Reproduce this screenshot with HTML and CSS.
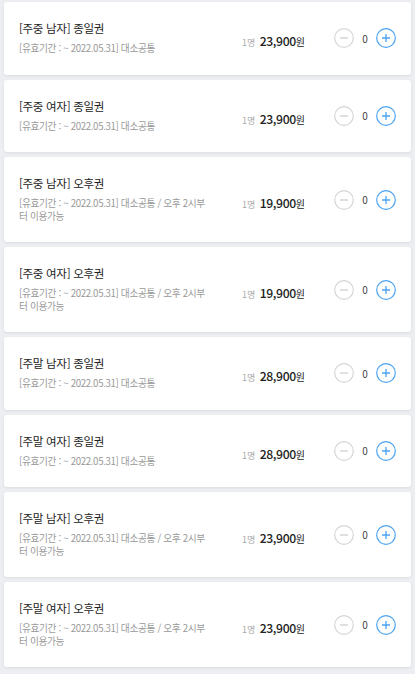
FILE: index.html
```html
<!DOCTYPE html>
<html lang="ko">
<head>
  <meta charset="UTF-8">
  <title>이용권 선택</title>
  <meta name="viewport" content="width=device-width, initial-scale=1.0">
  <link rel="stylesheet" href="styles.css">
</head>
<body>

  <div class="ticket-list">

    <div class="ticket">
      <div class="info">
        <p class="name">[주중 남자] 종일권</p>
        <p class="desc">[유효기간 : ~ 2022.05.31] 대소공통</p>
      </div>
      <div class="price"><span class="unit">1명</span> <span class="amount">23,900</span><span class="won">원</span></div>
      <div class="counter">
        <button class="ctl minus"><svg width="20" height="20" viewBox="0 0 20 20"><circle cx="10" cy="10" r="9.3" fill="none" stroke="#d6d6d6" stroke-width="1.2"/><path d="M6 10h8" stroke="#d0d0d0" stroke-width="1.3"/></svg></button>
        <span class="qty">0</span>
        <button class="ctl plus"><svg width="20" height="20" viewBox="0 0 20 20"><circle cx="10" cy="10" r="9.3" fill="none" stroke="#4ba3f3" stroke-width="1.2"/><path d="M6 10h8M10 6v8" stroke="#4ba3f3" stroke-width="1.3"/></svg></button>
      </div>
    </div>

    <div class="ticket">
      <div class="info">
        <p class="name">[주중 여자] 종일권</p>
        <p class="desc">[유효기간 : ~ 2022.05.31] 대소공통</p>
      </div>
      <div class="price"><span class="unit">1명</span> <span class="amount">23,900</span><span class="won">원</span></div>
      <div class="counter">
        <button class="ctl minus"><svg width="20" height="20" viewBox="0 0 20 20"><circle cx="10" cy="10" r="9.3" fill="none" stroke="#d6d6d6" stroke-width="1.2"/><path d="M6 10h8" stroke="#d0d0d0" stroke-width="1.3"/></svg></button>
        <span class="qty">0</span>
        <button class="ctl plus"><svg width="20" height="20" viewBox="0 0 20 20"><circle cx="10" cy="10" r="9.3" fill="none" stroke="#4ba3f3" stroke-width="1.2"/><path d="M6 10h8M10 6v8" stroke="#4ba3f3" stroke-width="1.3"/></svg></button>
      </div>
    </div>

    <div class="ticket">
      <div class="info">
        <p class="name">[주중 남자] 오후권</p>
        <p class="desc">[유효기간 : ~ 2022.05.31] 대소공통 / 오후 2시부터 이용가능</p>
      </div>
      <div class="price"><span class="unit">1명</span> <span class="amount">19,900</span><span class="won">원</span></div>
      <div class="counter">
        <button class="ctl minus"><svg width="20" height="20" viewBox="0 0 20 20"><circle cx="10" cy="10" r="9.3" fill="none" stroke="#d6d6d6" stroke-width="1.2"/><path d="M6 10h8" stroke="#d0d0d0" stroke-width="1.3"/></svg></button>
        <span class="qty">0</span>
        <button class="ctl plus"><svg width="20" height="20" viewBox="0 0 20 20"><circle cx="10" cy="10" r="9.3" fill="none" stroke="#4ba3f3" stroke-width="1.2"/><path d="M6 10h8M10 6v8" stroke="#4ba3f3" stroke-width="1.3"/></svg></button>
      </div>
    </div>

    <div class="ticket">
      <div class="info">
        <p class="name">[주중 여자] 오후권</p>
        <p class="desc">[유효기간 : ~ 2022.05.31] 대소공통 / 오후 2시부터 이용가능</p>
      </div>
      <div class="price"><span class="unit">1명</span> <span class="amount">19,900</span><span class="won">원</span></div>
      <div class="counter">
        <button class="ctl minus"><svg width="20" height="20" viewBox="0 0 20 20"><circle cx="10" cy="10" r="9.3" fill="none" stroke="#d6d6d6" stroke-width="1.2"/><path d="M6 10h8" stroke="#d0d0d0" stroke-width="1.3"/></svg></button>
        <span class="qty">0</span>
        <button class="ctl plus"><svg width="20" height="20" viewBox="0 0 20 20"><circle cx="10" cy="10" r="9.3" fill="none" stroke="#4ba3f3" stroke-width="1.2"/><path d="M6 10h8M10 6v8" stroke="#4ba3f3" stroke-width="1.3"/></svg></button>
      </div>
    </div>

    <div class="ticket">
      <div class="info">
        <p class="name">[주말 남자] 종일권</p>
        <p class="desc">[유효기간 : ~ 2022.05.31] 대소공통</p>
      </div>
      <div class="price"><span class="unit">1명</span> <span class="amount">28,900</span><span class="won">원</span></div>
      <div class="counter">
        <button class="ctl minus"><svg width="20" height="20" viewBox="0 0 20 20"><circle cx="10" cy="10" r="9.3" fill="none" stroke="#d6d6d6" stroke-width="1.2"/><path d="M6 10h8" stroke="#d0d0d0" stroke-width="1.3"/></svg></button>
        <span class="qty">0</span>
        <button class="ctl plus"><svg width="20" height="20" viewBox="0 0 20 20"><circle cx="10" cy="10" r="9.3" fill="none" stroke="#4ba3f3" stroke-width="1.2"/><path d="M6 10h8M10 6v8" stroke="#4ba3f3" stroke-width="1.3"/></svg></button>
      </div>
    </div>

    <div class="ticket">
      <div class="info">
        <p class="name">[주말 여자] 종일권</p>
        <p class="desc">[유효기간 : ~ 2022.05.31] 대소공통</p>
      </div>
      <div class="price"><span class="unit">1명</span> <span class="amount">28,900</span><span class="won">원</span></div>
      <div class="counter">
        <button class="ctl minus"><svg width="20" height="20" viewBox="0 0 20 20"><circle cx="10" cy="10" r="9.3" fill="none" stroke="#d6d6d6" stroke-width="1.2"/><path d="M6 10h8" stroke="#d0d0d0" stroke-width="1.3"/></svg></button>
        <span class="qty">0</span>
        <button class="ctl plus"><svg width="20" height="20" viewBox="0 0 20 20"><circle cx="10" cy="10" r="9.3" fill="none" stroke="#4ba3f3" stroke-width="1.2"/><path d="M6 10h8M10 6v8" stroke="#4ba3f3" stroke-width="1.3"/></svg></button>
      </div>
    </div>

    <div class="ticket">
      <div class="info">
        <p class="name">[주말 남자] 오후권</p>
        <p class="desc">[유효기간 : ~ 2022.05.31] 대소공통 / 오후 2시부터 이용가능</p>
      </div>
      <div class="price"><span class="unit">1명</span> <span class="amount">23,900</span><span class="won">원</span></div>
      <div class="counter">
        <button class="ctl minus"><svg width="20" height="20" viewBox="0 0 20 20"><circle cx="10" cy="10" r="9.3" fill="none" stroke="#d6d6d6" stroke-width="1.2"/><path d="M6 10h8" stroke="#d0d0d0" stroke-width="1.3"/></svg></button>
        <span class="qty">0</span>
        <button class="ctl plus"><svg width="20" height="20" viewBox="0 0 20 20"><circle cx="10" cy="10" r="9.3" fill="none" stroke="#4ba3f3" stroke-width="1.2"/><path d="M6 10h8M10 6v8" stroke="#4ba3f3" stroke-width="1.3"/></svg></button>
      </div>
    </div>

    <div class="ticket">
      <div class="info">
        <p class="name">[주말 여자] 오후권</p>
        <p class="desc">[유효기간 : ~ 2022.05.31] 대소공통 / 오후 2시부터 이용가능</p>
      </div>
      <div class="price"><span class="unit">1명</span> <span class="amount">23,900</span><span class="won">원</span></div>
      <div class="counter">
        <button class="ctl minus"><svg width="20" height="20" viewBox="0 0 20 20"><circle cx="10" cy="10" r="9.3" fill="none" stroke="#d6d6d6" stroke-width="1.2"/><path d="M6 10h8" stroke="#d0d0d0" stroke-width="1.3"/></svg></button>
        <span class="qty">0</span>
        <button class="ctl plus"><svg width="20" height="20" viewBox="0 0 20 20"><circle cx="10" cy="10" r="9.3" fill="none" stroke="#4ba3f3" stroke-width="1.2"/><path d="M6 10h8M10 6v8" stroke="#4ba3f3" stroke-width="1.3"/></svg></button>
      </div>
    </div>

  </div>

</body>
</html>
```
FILE: styles.css
```css
body {
  font-family: "Noto Sans CJK KR", "Noto Sans", sans-serif;
  background: #eceef1;
  margin: 0;
  padding: 0;
}

.ticket-list {
  display: flex;
  flex-direction: column;
  gap: 5px;
  padding: 2px 4px 8px;
}

.ticket {
  display: grid;
  grid-template-columns: 1fr 92px 62px;
  align-items: center;
  background: #fff;
  border-radius: 3px;
  box-shadow: 0 1px 3px rgba(0, 0, 0, 0.08);
  padding: 0 15px;
}

.info {
  max-width: 192px;
  padding: 18px 0 20px;
}

.name {
  margin: 0;
  font-size: 11.5px;
  line-height: 16px;
  letter-spacing: -0.3px;
  color: #222;
}

.desc {
  margin: 6px 0 0;
  font-size: 9.7px;
  line-height: 12.5px;
  letter-spacing: -0.35px;
  color: #999;
}

.price {
  padding-top: 2px;
  white-space: nowrap;
  color: #222;
}

.unit {
  font-size: 9px;
  color: #aaa;
}

.amount {
  font-size: 12.2px;
  font-weight: 500;
  letter-spacing: -0.4px;
}

.won {
  font-size: 10px;
  letter-spacing: -0.3px;
}

.counter {
  display: flex;
  align-items: center;
  justify-content: space-between;
}

.ctl {
  border: none;
  background: none;
  padding: 0;
  width: 20px;
  height: 20px;
  cursor: pointer;
}

.ctl svg {
  display: block;
}

.qty {
  font-size: 10px;
  color: #444;
}
```
